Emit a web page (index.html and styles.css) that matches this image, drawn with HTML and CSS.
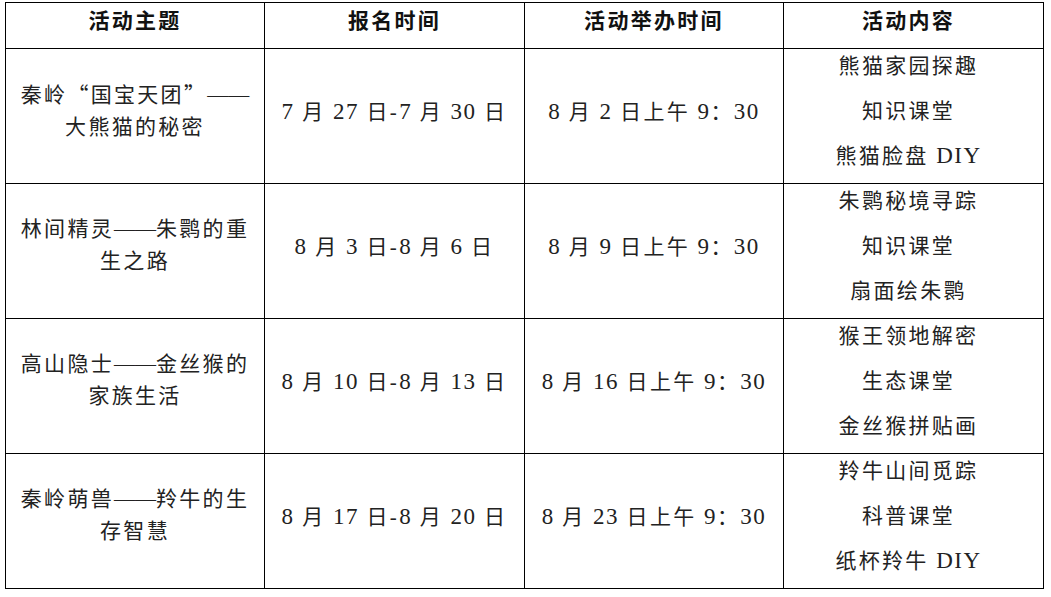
FILE: index.html
```html
<!DOCTYPE html>
<html lang="zh-CN">
<head>
<meta charset="utf-8">
<title>活动安排</title>
<link rel="stylesheet" href="styles.css">
</head>
<body>
<table class="schedule">
  <colgroup>
    <col class="c1"><col class="c2"><col class="c3"><col class="c4">
  </colgroup>
  <thead>
    <tr class="head-row">
      <th><span class="lift">活动主题</span></th>
      <th><span class="lift">报名时间</span></th>
      <th><span class="lift">活动举办时间</span></th>
      <th class="content-col"><span class="lift">活动内容</span></th>
    </tr>
  </thead>
  <tbody>
    <tr class="row">
      <td class="theme"><div class="lift">秦岭<span class="cjk">“</span>国宝天团<span class="cjk">”</span><span class="dash">——</span><br>大熊猫的秘密</div></td>
      <td><div class="lift"><span class="num">7</span> 月 <span class="num">27</span> 日-<span class="num">7</span> 月 <span class="num">30</span> 日</div></td>
      <td><div class="lift"><span class="num">8</span> 月 <span class="num">2</span> 日上午 <span class="num">9</span>：<span class="num">30</span></div></td>
      <td class="content-col"><div class="items"><div>熊猫家园探趣</div><div>知识课堂</div><div>熊猫脸盘 <span class="num">DIY</span></div></div></td>
    </tr>
    <tr class="row">
      <td class="theme"><div class="lift">林间精灵<span class="dash">——</span>朱鹮的重<br>生之路</div></td>
      <td><div class="lift"><span class="num">8</span> 月 <span class="num">3</span> 日-<span class="num">8</span> 月 <span class="num">6</span> 日</div></td>
      <td><div class="lift"><span class="num">8</span> 月 <span class="num">9</span> 日上午 <span class="num">9</span>：<span class="num">30</span></div></td>
      <td class="content-col"><div class="items"><div>朱鹮秘境寻踪</div><div>知识课堂</div><div>扇面绘朱鹮</div></div></td>
    </tr>
    <tr class="row">
      <td class="theme"><div class="lift">高山隐士<span class="dash">——</span>金丝猴的<br>家族生活</div></td>
      <td><div class="lift"><span class="num">8</span> 月 <span class="num">10</span> 日-<span class="num">8</span> 月 <span class="num">13</span> 日</div></td>
      <td><div class="lift"><span class="num">8</span> 月 <span class="num">16</span> 日上午 <span class="num">9</span>：<span class="num">30</span></div></td>
      <td class="content-col"><div class="items"><div>猴王领地解密</div><div>生态课堂</div><div>金丝猴拼贴画</div></div></td>
    </tr>
    <tr class="row">
      <td class="theme"><div class="lift">秦岭萌兽<span class="dash">——</span>羚牛的生<br>存智慧</div></td>
      <td><div class="lift"><span class="num">8</span> 月 <span class="num">17</span> 日-<span class="num">8</span> 月 <span class="num">20</span> 日</div></td>
      <td><div class="lift"><span class="num">8</span> 月 <span class="num">23</span> 日上午 <span class="num">9</span>：<span class="num">30</span></div></td>
      <td class="content-col"><div class="items"><div>羚牛山间觅踪</div><div>科普课堂</div><div>纸杯羚牛 <span class="num">DIY</span></div></div></td>
    </tr>
  </tbody>
</table>
</body>
</html>
```

FILE: styles.css
```css
html, body {
  background: #ffffff;
}

body {
  margin: 2px 0 0 5px;
  font-family: "Liberation Serif", "Noto Sans CJK SC", serif;
  font-size: 21px;
  letter-spacing: 2.3px;
  color: #222222;
}

.schedule {
  border-collapse: collapse;
  table-layout: fixed;
  width: 1039px;
}

.c1 { width: 259px; }
.c2 { width: 260px; }
.c3 { width: 259px; }
.c4 { width: 260px; }

.schedule th,
.schedule td {
  border: 1px solid #000;
  padding: 0;
  text-align: center;
  vertical-align: middle;
}

.schedule th {
  font-family: "Noto Sans CJK SC", sans-serif;
  font-weight: 700;
  color: #111;
}

.head-row {
  height: 46px;
}

.row {
  height: 135px;
}

.lift {
  display: block;
  padding-bottom: 13px;
}

.theme .lift {
  line-height: 32px;
}

.num {
  font-size: 23px;
  letter-spacing: 1.5px;
  line-height: 1;
}

.cjk {
  font-family: "Noto Sans CJK SC", sans-serif;
}

.dash {
  letter-spacing: 0;
}

.schedule td.content-col,
.schedule th.content-col {
  padding-right: 10px;
}

.items {
  line-height: 45px;
  margin-top: -9px;
}
```
